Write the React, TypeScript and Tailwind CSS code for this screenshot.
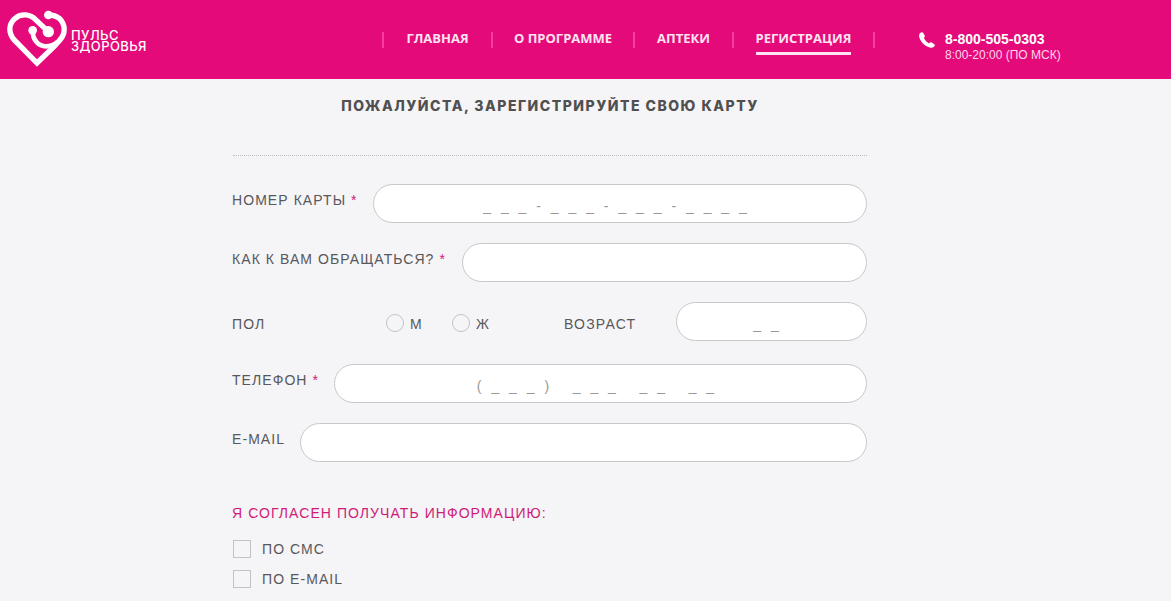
const navItems = [
  { label: "ГЛАВНАЯ", width: "w-[109px]" },
  { label: "О ПРОГРАММЕ", width: "w-[142px]" },
  { label: "АПТЕКИ", width: "w-[99px]" },
  { label: "РЕГИСТРАЦИЯ", width: "w-[141px]", active: true },
];

const fieldClass =
  "h-[39px] rounded-full border border-[#c9c7ca] bg-white text-center text-sm tracking-[3px] text-[#999] outline-none placeholder:text-[#999] placeholder:opacity-100";

function Logo() {
  return (
    <a href="#" className="flex w-[150px] shrink-0 items-start text-white">
      <svg viewBox="0 0 186 174" className="mt-[10px] ml-[6px] h-[58px] w-[62px] shrink-0" fill="none">
        <path
          d="M127 65 L92 32 C74 11 45 9 26 26 C7 43 7 69 24 89 L93 159 L146 108 L161 91 C180 70 178 43 161 26 C150 17 141 15 127 15"
          stroke="currentColor"
          strokeWidth="16"
          strokeLinejoin="miter"
        />
        <path d="M80 62 C80 88 96 109 120 109 C134 109 145 104 154 96" stroke="currentColor" strokeWidth="14" />
        <circle cx="127" cy="65" r="17" fill="currentColor" />
        <circle cx="80" cy="61" r="13" fill="currentColor" />
        <circle cx="127" cy="15" r="13" fill="currentColor" />
      </svg>
      <span className="mt-[30px] ml-[3px] font-['Inter'] text-[13px] leading-[11px] font-medium tracking-[0.4px]">
        ПУЛЬС
        <br />
        ЗДОРОВЬЯ
      </span>
    </a>
  );
}

function PhoneIcon() {
  return (
    <svg viewBox="0 0 16 16" className="size-4" fill="currentColor">
      <path d="M1 1.2Q2.5-.3 4 .6L5.8 3.8Q6.2 4.8 4.8 6Q6.5 9.7 10 11.4Q11.2 10 12.2 10.3L15.4 12.2Q16.3 13 15.2 14.4Q13.6 16 11.5 15.7C5.5 14.5.6 9 .1 4Q0 2.3 1 1.2Z" />
    </svg>
  );
}

function Header() {
  return (
    <header className="flex h-[79px] items-start bg-[#e50a7a]">
      <Logo />
      <nav className="mt-8 ml-[232px] flex w-[493px] shrink-0 border-l-2 border-[#f93c9c] font-['Open_Sans'] text-[13px] font-bold text-[#ffe3f2]">
        {navItems.map((item) => (
          <a
            key={item.label}
            href="#"
            className={`flex h-4 shrink-0 justify-center border-r-2 border-[#f93c9c] leading-3 whitespace-nowrap ${item.width}`}
          >
            <span className={item.active ? "h-[23px] border-b-[3px] border-[#ffe3f2]" : ""}>{item.label}</span>
          </a>
        ))}
      </nav>
      <div className="mt-8 ml-[44px] flex text-white">
        <PhoneIcon />
        <div className="ml-[10px] whitespace-nowrap">
          <p className="text-[14px] leading-[15px] font-bold">8-800-505-0303</p>
          <p className="text-[12px] leading-4 text-[#ffd6ec]">8:00-20:00 (ПО МСК)</p>
        </div>
      </div>
    </header>
  );
}

function Label({ children, required }: { children: string; required?: boolean }) {
  return (
    <label className="-ml-px shrink-0 leading-8 whitespace-nowrap">
      {children}
      {required && <span className="text-[#d6187a]"> *</span>}
    </label>
  );
}

function Radio({ label, className }: { label: string; className: string }) {
  return (
    <label className={`flex shrink-0 items-center ${className}`}>
      <span className="mr-[6px] mb-[2px] size-[18px] rounded-full border border-[#c4c2c6]" />
      {label}
    </label>
  );
}

function Checkbox({ label }: { label: string }) {
  return (
    <label className="flex h-[30px] items-center">
      <span className="mr-[11px] size-[18px] border border-[#c4c2c6]" />
      {label}
    </label>
  );
}

export default function App() {
  return (
    <div className="h-[601px] w-[1171px] overflow-hidden bg-[#f5f4f7] font-['Liberation_Sans',sans-serif]">
      <Header />
      <main className="ml-[233px] w-[634px] text-[14px] tracking-[1.07px] text-[#58585a]">
        <h1 className="h-[77px] border-b border-dotted border-[#bbb] pt-[17px] text-center font-['Inter'] text-[14px] leading-5 font-extrabold tracking-[1.5px] text-[#505050]">
          ПОЖАЛУЙСТА, ЗАРЕГИСТРИРУЙТЕ СВОЮ КАРТУ
        </h1>
        <form className="mt-7">
          <div className="flex h-[59px] items-start justify-between">
            <Label required>НОМЕР КАРТЫ</Label>
            <input className={`${fieldClass} w-[494px] pt-1 pr-[7px]`} placeholder="_ _ _ - _ _ _ - _ _ _ - _ _ _ _" />
          </div>
          <div className="flex h-[59px] items-start justify-between">
            <Label required>КАК К ВАМ ОБРАЩАТЬСЯ?</Label>
            <input className={`${fieldClass} w-[405px]`} />
          </div>
          <div className="flex h-[62px] items-start">
            <div className="-ml-px flex h-[44px] w-[444px] items-center">
              <span className="w-[154px]">ПОЛ</span>
              <Radio label="М" className="w-[66px]" />
              <Radio label="Ж" className="w-[112px]" />
              <span className="tracking-[1.2px]">ВОЗРАСТ</span>
            </div>
            <input className={`${fieldClass} w-[191px] pt-1 pr-2`} placeholder="_ _" />
          </div>
          <div className="flex h-[59px] items-start justify-between">
            <Label required>ТЕЛЕФОН</Label>
            <input className={`${fieldClass} w-[533px] pt-1 pr-[7px]`} placeholder="( _ _ _ )   _ _ _   _ _   _ _" />
          </div>
          <div className="flex h-[80px] items-start justify-between">
            <Label>E-MAIL</Label>
            <input className={`${fieldClass} w-[567px]`} />
          </div>
          <p className="mb-[11px] -ml-px leading-5 text-[#cf1b78]">Я СОГЛАСЕН ПОЛУЧАТЬ ИНФОРМАЦИЮ:</p>
          <Checkbox label="ПО СМС" />
          <Checkbox label="ПО E-MAIL" />
        </form>
      </main>
    </div>
  );
}
